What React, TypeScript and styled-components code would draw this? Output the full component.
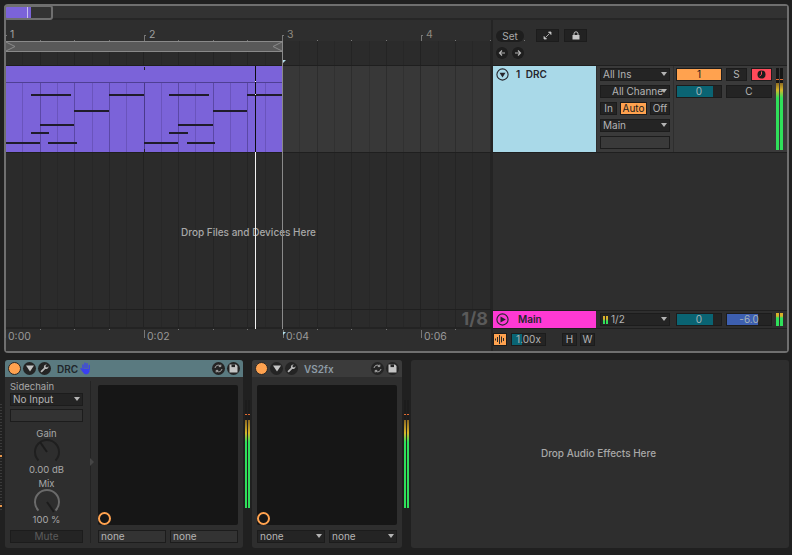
import styled, { createGlobalStyle, css } from "styled-components";

const BAR = 138.5;
const STEP = BAR / 8;

const GlobalStyle = createGlobalStyle`
  html, body {
    margin: 0;
    padding: 0;
    width: 792px;
    height: 555px;
    overflow: hidden;
    background: #202020;
    font-family: Inter, "Noto Sans", sans-serif;
    font-size: 10px;
    color: #b4b4b4;
  }
`;

// lines sit at the end of each step so the clip has no line on its left edge
const lineAt = (color: string, size: number) =>
  `repeating-linear-gradient(90deg, transparent 0 ${size - 1}px, ${color} ${size - 1}px ${size}px)`;

const gridLines = (weak: string, mid: string, strong: string) => css`
  background-image: ${lineAt(strong, BAR)}, ${lineAt(mid, BAR / 4)}, ${lineAt(weak, STEP)};
`;

const Page = styled.div`
  width: 792px;
  height: 555px;
  padding: 4px 3px 0 4px;
  box-sizing: border-box;
  display: flex;
  flex-direction: column;
  gap: 7px;
`;

const Arrangement = styled.div`
  position: relative;
  width: 785px;
  height: 349px;
  box-sizing: border-box;
  border: 2px solid #6f6f6f;
  border-radius: 4px;
  background: #2e2e2e;
  display: grid;
  grid-template-columns: 485px 1fr;
  grid-template-rows: 14px 45px 88px 157px 19px 1fr;
`;

const Overview = styled.div`
  grid-column: 1 / 3;
  background: #323232;
  border-bottom: 2px solid #262626;
`;

const OverviewThumb = styled.div`
  position: absolute;
  left: -2px;
  top: -1px;
  width: 49px;
  height: 15px;
  box-sizing: border-box;
  border: 2px solid #6f6f6f;
  border-radius: 3px;
  background: linear-gradient(90deg, #7b63d9 0 21px, #c8c0ee 21px 22px, #7b63d9 22px 25px, #333 25px);
`;

const BeatRuler = styled.div`
  position: relative;
  background: #2e2e2e;
`;

const BarLabel = styled.span<{ $x: number; $dim?: boolean }>`
  position: absolute;
  left: ${(p) => p.$x}px;
  top: 9px;
  padding-left: 5px;
  font-size: 10.5px;
  line-height: 12px;
  color: ${(p) => (p.$dim ? "#8f8a80" : "#a0a0a0")};
  &::before {
    content: "";
    position: absolute;
    left: 0;
    top: 6px;
    width: 2px;
    height: 6px;
    box-sizing: border-box;
    border-left: 1px solid #777;
    border-top: 1px solid #777;
  }
`;

const RulerTick = styled.i<{ $x: number }>`
  position: absolute;
  left: ${(p) => p.$x}px;
  top: 20px;
  width: 1px;
  height: 1px;
  background: #777;
`;

const LoopBrace = styled.div`
  position: absolute;
  left: 0;
  top: 21px;
  width: 276px;
  height: 11px;
  box-sizing: border-box;
  border-top: 1px solid #8a8a8a;
  border-bottom: 1px solid #8a8a8a;
  background: #595959;
`;

const BraceEnd = styled.svg<{ $right?: boolean }>`
  position: absolute;
  top: 0;
  width: 10px;
  height: 9px;
  ${(p) => (p.$right ? "right: 0;" : "left: 0;")}
`;

const RulerGrid = styled.div`
  position: absolute;
  left: 0;
  right: 0;
  top: 21px;
  height: 24px;
  background-color: #2b2b2b;
  ${gridLines("#272727", "#242424", "#222222")}
`;

const ClipLane = styled.div`
  position: relative;
  border-top: 1px solid #1f1f1f;
  border-bottom: 1px solid #1f1f1f;
  background-color: #383838;
  ${gridLines("#313131", "#2d2d2d", "#2a2a2a")}
`;

const Clip = styled.div`
  position: absolute;
  left: 0;
  top: 0;
  bottom: 0;
  width: 276px;
  background: #7b63d9;
  display: flex;
  flex-direction: column;
`;

const ClipTitle = styled.div`
  position: relative;
  height: 16px;
  flex: none;
  border-bottom: 1px solid #4f3f94;
`;

const ClipTick = styled.i<{ $bottom?: boolean }>`
  position: absolute;
  left: 138px;
  ${(p) => (p.$bottom ? "bottom: 0;" : "top: 1px;")}
  width: 1px;
  height: 3px;
  background: #222;
`;

const ClipNotes = styled.div`
  position: relative;
  flex: 1;
  ${gridLines("#6a54bd", "#5b48a6", "#4a3a8a")}
`;

const Note = styled.i`
  position: absolute;
  height: 2px;
  background: #1f1c2b;
`;

const EmptyLane = styled.div`
  position: relative;
  background-color: #2b2b2b;
  ${gridLines("#272727", "#242424", "#222222")}
  display: flex;
  align-items: center;
  justify-content: center;
  border-bottom: 1px solid #1f1f1f;
`;

const DropHint = styled.span`
  font-size: 10px;
  font-weight: 500;
  color: #a8a8a8;
  margin-top: 1px;
`;

const MainLane = styled.div`
  position: relative;
  background-color: #2b2b2b;
  border-bottom: 2px solid #232323;
  ${gridLines("#272727", "#242424", "#222222")}
`;

const GridSize = styled.span`
  position: absolute;
  right: 3px;
  top: -1px;
  font-size: 18px;
  line-height: 20px;
  font-weight: 700;
  color: #5a5a5a;
`;

const TimeRuler = styled.div`
  position: relative;
  background: #2e2e2e;
`;

const TimeLabel = styled.span<{ $x: number }>`
  position: absolute;
  left: ${(p) => p.$x}px;
  top: 1px;
  height: 7px;
  padding-left: 2px;
  padding-top: 1px;
  font-size: 10.5px;
  line-height: 12px;
  color: #999;
  border-left: 1px solid #777;
`;

const PlayheadOver = styled.div`
  position: absolute;
  left: 249px;
  top: 60px;
  width: 1px;
  height: 263px;
  background: linear-gradient(180deg, #0c0c10 0 86px, #f2f2f2 86px);
`;

const PlayheadDot = styled.i<{ $y: number }>`
  position: absolute;
  left: 0;
  top: ${(p) => p.$y}px;
  width: 1px;
  height: 1px;
  background: #f2f2f2;
`;

const LoopEnd = styled.div`
  position: absolute;
  left: 276px;
  top: 35px;
  width: 1px;
  height: 288px;
  background: #8a8a8a;
`;

const LoopFlag = styled.i<{ $top: number }>`
  position: absolute;
  left: 277px;
  top: ${(p) => p.$top}px;
  width: 0;
  height: 0;
  border-top: 3px solid #b5e3ee;
  border-right: 3px solid transparent;
`;

const SideCell = styled.div`
  border-left: 2px solid #242424;
  background: #2e2e2e;
`;

const SetCell = styled(SideCell)`
  padding: 9px 0 0 3px;
  display: flex;
  flex-direction: column;
  gap: 5px;
`;

const SetRow = styled.div`
  display: flex;
  align-items: center;
`;

const SetPill = styled.div`
  width: 28px;
  height: 12px;
  border-radius: 6px;
  background: #1e1e1e;
  color: #a8a8a8;
  font-size: 10px;
  line-height: 12px;
  text-align: center;
  margin-right: 12px;
`;

const IconBox = styled.div`
  width: 23px;
  height: 13px;
  background: #222;
  border: 1px solid #1c1c1c;
  box-sizing: border-box;
  display: flex;
  align-items: center;
  justify-content: center;
  margin-right: 5px;
`;

const RoundNav = styled.div`
  width: 12px;
  height: 12px;
  border-radius: 50%;
  background: #1e1e1e;
  margin-right: 4px;
  display: flex;
  align-items: center;
  justify-content: center;
`;

const TrackRow = styled(SideCell)`
  display: flex;
  border-top: 1px solid #1f1f1f;
  border-bottom: 1px solid #1f1f1f;
`;

const TrackTitle = styled.div<{ $pink?: boolean }>`
  width: 103px;
  flex: none;
  box-sizing: border-box;
  background: ${(p) => (p.$pink ? "#ff39d4" : "#a9d9e8")};
  color: #26262c;
  font-size: 10px;
  font-weight: 600;
  word-spacing: 3px;
  display: flex;
  align-items: ${(p) => (p.$pink ? "center" : "flex-start")};
  gap: ${(p) => (p.$pink ? 9 : 7)}px;
  padding: ${(p) => (p.$pink ? "0 0 0 3px" : "2px 0 0 3px")};
  line-height: 13px;
`;

const TitleFold = styled.svg`
  width: 13px;
  height: 13px;
  flex: none;
`;

const RoutingCol = styled.div<{ $main?: boolean }>`
  width: 76px;
  flex: none;
  box-sizing: border-box;
  margin-left: 1px;
  background: ${(p) => (p.$main ? "#2e2e2e" : "#3a3a3a")};
  padding: 2px 3px;
  display: flex;
  flex-direction: column;
  gap: 4px;
`;

const MixerCol = styled.div<{ $main?: boolean }>`
  flex: 1;
  margin-left: 1px;
  background: ${(p) => (p.$main ? "#2e2e2e" : "#3a3a3a")};
  padding: 2px 0 0 2px;
  display: grid;
  grid-template-columns: 46px 21px 21px 7px;
  grid-auto-rows: 13px;
  column-gap: 4px;
  row-gap: 4px;
`;

const controlFrame = css`
  height: 13px;
  box-sizing: border-box;
  border: 1px solid #1c1c1c;
  background: #242424;
  font-size: 10px;
  line-height: 11px;
  color: #b4b4b4;
`;

const Chooser = styled.div<{ $inset?: boolean }>`
  ${controlFrame}
  position: relative;
  display: flex;
  align-items: center;
  gap: 3px;
  padding: 0 10px 0 ${(p) => (p.$inset ? 11 : 2)}px;
  white-space: nowrap;
  &::after {
    content: "";
    position: absolute;
    right: 2px;
    top: 3px;
    border-left: 3.5px solid transparent;
    border-right: 3.5px solid transparent;
    border-top: 4px solid #b4b4b4;
  }
`;

const ChooserSlot = styled.div`
  ${controlFrame}
  background: #3a3a3a;
`;

const MonitorRow = styled.div`
  display: flex;
  gap: 3px;
`;

const MonitorButton = styled.div<{ $on?: boolean; $w: number }>`
  ${controlFrame}
  width: ${(p) => p.$w}px;
  text-align: center;
  background: ${(p) => (p.$on ? "#ffa24f" : "#242424")};
  color: ${(p) => (p.$on ? "#1c1c1c" : "#b4b4b4")};
`;

const MixButton = styled.div<{ $on?: string; $dark?: boolean; $wide?: boolean }>`
  ${controlFrame}
  text-align: center;
  background: ${(p) => p.$on || "#242424"};
  color: ${(p) => (p.$dark ? "#1c1c1c" : "#b4b4b4")};
  ${(p) => p.$wide && "grid-column: 2 / 4;"}
  display: flex;
  align-items: center;
  justify-content: center;
`;

const MixValue = styled.div<{ $color: string; $fill: number; $main?: boolean }>`
  ${controlFrame}
  text-align: center;
  color: #a8b4b8;
  background: linear-gradient(90deg, ${(p) => p.$color} ${(p) => p.$fill}%, #242424 ${(p) => p.$fill}%);
  ${(p) => p.$main && "grid-column: span 2;"}
`;

const MeterPair = styled.div<{ $bar: number; $h: number }>`
  display: flex;
  gap: 1px;
  height: ${(p) => p.$h}px;
  > i {
    display: block;
    width: ${(p) => p.$bar}px;
    height: 100%;
  }
`;

const TrackMeterBar = styled.i`
  background:
    linear-gradient(180deg, #161616 0 11px, #e06a30 11px 12px, #161616 12px 15px, #8d6a22 15px, #d7b62a 22px, #2fe05a 30px);
`;

const MainMeterBar = styled.i`
  background: linear-gradient(180deg, #d8b02a 0 3px, #2fe05a 5px);
`;

const TrackMeter = styled(MeterPair)`
  grid-column: 4;
  grid-row: 1 / 6;
`;

const ZoomCell = styled(SideCell)`
  display: flex;
  align-items: flex-start;
  padding: 4px 0 0 0;
`;

const WaveBox = styled.div`
  width: 14px;
  height: 13px;
  background: #ffa24f;
  border: 1px solid #1c1c1c;
  box-sizing: border-box;
  display: flex;
  align-items: center;
  justify-content: center;
  margin-right: 4px;
`;

const RateBox = styled.div`
  ${controlFrame}
  width: 35px;
  text-align: center;
  background: linear-gradient(90deg, #0a6473 0 10px, #242424 10px);
  margin-right: 16px;
`;

const LetterBox = styled.div`
  ${controlFrame}
  width: 15px;
  text-align: center;
  margin-right: 3px;
`;

const DeviceChain = styled.div`
  display: flex;
  align-items: stretch;
  height: 188px;
  gap: 2px;
`;

const EdgeStrip = styled.div`
  position: relative;
  width: 2px;
  height: 108px;
  margin: 44px 1px 0 -4px;
  background: repeating-linear-gradient(180deg, #3a3a3a 0 1px, transparent 1px 3px);
`;

const EdgeMark = styled.i<{ $y: number }>`
  position: absolute;
  left: 0;
  top: ${(p) => p.$y}px;
  width: 2px;
  height: 2px;
  background: #e8954a;
`;

const Device = styled.div<{ $w: number }>`
  width: ${(p) => p.$w}px;
  flex: none;
  background: #2e2e2e;
  border-radius: 3px;
  display: flex;
  flex-direction: column;
  overflow: hidden;
`;

const DeviceHead = styled.div<{ $teal?: boolean }>`
  height: 17px;
  flex: none;
  background: ${(p) => (p.$teal ? "#5a7a80" : "#3b3b3b")};
  display: flex;
  align-items: center;
  padding: 0 3px;
  gap: 2px;
`;

const PowerDot = styled.div`
  width: 13px;
  height: 13px;
  box-sizing: border-box;
  border-radius: 50%;
  background: #ffa24f;
  border: 1px solid #262626;
`;

const HeadRound = styled.div`
  width: 13px;
  height: 13px;
  border-radius: 50%;
  background: #242424;
  display: flex;
  align-items: center;
  justify-content: center;
  flex: none;
`;

const DeviceName = styled.span<{ $teal?: boolean }>`
  margin-left: 4px;
  font-size: 10px;
  font-weight: 600;
  color: ${(p) => (p.$teal ? "#20262a" : "#8d9ba6")};
`;

const HeadSpacer = styled.div`
  flex: 1;
`;

const DeviceBody = styled.div`
  flex: 1;
  display: flex;
  padding: 8px 5px 5px 5px;
`;

const SidePane = styled.div`
  width: 73px;
  flex: none;
  margin-top: -4px;
  display: flex;
  flex-direction: column;
  align-items: center;
  font-size: 9.5px;
  color: #a8a8a8;
`;

const SideLabel = styled.div<{ $left?: boolean; $top?: number }>`
  align-self: ${(p) => (p.$left ? "flex-start" : "center")};
  line-height: 11px;
  margin-top: ${(p) => p.$top || 0}px;
`;

const SideChooser = styled(Chooser)`
  width: 100%;
  margin-top: 1px;
`;

const SideEmpty = styled.div`
  ${controlFrame}
  width: 100%;
  margin-top: 3px;
  flex: none;
  background: #333;
`;

const MuteButton = styled.div`
  ${controlFrame}
  width: 100%;
  margin-top: auto;
  text-align: center;
  color: #5c5c5c;
`;

const KnobSvg = styled.svg`
  width: 28px;
  height: 26px;
  display: block;
  flex: none;
`;

const PaneDivider = styled.div`
  position: relative;
  width: 1px;
  flex: none;
  margin: -4px 7px 0;
  background: #232323;
  &::after {
    content: "";
    position: absolute;
    left: 0;
    top: 77px;
    border-top: 4px solid transparent;
    border-bottom: 4px solid transparent;
    border-left: 4px solid #454545;
  }
`;

const PlotPane = styled.div`
  flex: 1;
  display: flex;
  flex-direction: column;
  gap: 5px;
`;

const Plot = styled.div`
  position: relative;
  flex: 1;
  background: #161616;
  border-radius: 2px;
`;

const PlotHandle = styled.i`
  position: absolute;
  left: 0;
  bottom: 0;
  width: 13px;
  height: 13px;
  box-sizing: border-box;
  border: 2px solid #ffa24f;
  border-radius: 50%;
`;

const PlotControls = styled.div`
  display: flex;
  gap: 4px;
  > * {
    flex: 1;
  }
`;

const NoneField = styled.div`
  ${controlFrame}
  background: #333;
  padding-left: 2px;
`;

const DeviceMeter = styled(MeterPair)`
  margin-top: 40px;
  margin-bottom: auto;
`;

const DeviceMeterBar = styled.i`
  background:
    linear-gradient(180deg, #1c1c1c 0 14px, #e06a30 14px 15px, #1c1c1c 15px 20px, #8d6a22 20px, #d7b62a 33px, #2fe05a 42px);
`;

const DropPanel = styled.div`
  flex: 1;
  background: #2e2e2e;
  border-radius: 3px;
  display: flex;
  align-items: center;
  justify-content: center;
  font-size: 10px;
  font-weight: 500;
  color: #a8a8a8;
  padding: 0 3px 2px 0;
`;

const notes = [
  [31, 71, 94], [109, 144, 94], [169, 209, 94], [247, 282, 94],
  [74, 109, 110], [213, 247, 110],
  [40, 74, 124], [178, 213, 124],
  [31, 49, 132], [169, 188, 132],
  [6, 40, 142], [48, 77, 142], [144, 178, 142], [187, 215, 142],
];

const FoldIcon = ({ color = "#26262c", up = false }: { color?: string; up?: boolean }) => (
  <TitleFold viewBox="0 0 13 13">
    <circle cx="6.5" cy="6.5" r="5.6" fill="none" stroke={color} strokeWidth="1.1" />
    {up
      ? <path d="M4.5 3.5 L9.8 6.5 L4.5 9.5 Z" fill={color} />
      : <path d="M3.5 4.8 H9.5 L6.5 9.5 Z" fill={color} />}
  </TitleFold>
);

const Wrench = () => (
  <svg width="9" height="9" viewBox="0 0 9 9">
    <path d="M8.6 2.2 A2.6 2.6 0 0 1 5.2 4.9 L2 8.2 A1 1 0 0 1 .7 6.9 L4 3.7 A2.6 2.6 0 0 1 6.8 .4 L5.3 1.9 L5.9 3 L7 3.6 Z" fill="#b8b8b8" />
  </svg>
);

const Swap = () => (
  <svg width="9" height="9" viewBox="0 0 9 9" fill="none" stroke="#a8a8a8" strokeWidth="1">
    <path d="M1 4 A3.5 3.5 0 0 1 6.5 1.8" />
    <path d="M8 5 A3.5 3.5 0 0 1 2.5 7.2" />
    <path d="M6.8 .6 V2.6 H4.8" />
    <path d="M2.2 8.4 V6.4 H4.2" />
  </svg>
);

const Floppy = () => (
  <svg width="9" height="9" viewBox="0 0 9 9">
    <path d="M.5 .5 H7 L8.5 2 V8.5 H.5 Z" fill="#c4c4c4" />
    <rect x="2.5" y=".5" width="3.5" height="2.6" fill="#242424" />
  </svg>
);

const FoldTriangle = () => (
  <svg width="8" height="7" viewBox="0 0 8 7">
    <path d="M0 .5 H8 L4 6.5 Z" fill="#c4c4c4" />
  </svg>
);

const HandIcon = () => (
  <svg width="11" height="13" viewBox="0 0 11 13" fill="none" stroke="#3a40f0" strokeLinecap="round">
    <path d="M3 7 V3 M5 6 V1.2 M7 6 V1.6 M9.3 7 V3.4" strokeWidth="1.3" />
    <path d="M1 6.5 L2.6 9" strokeWidth="1.3" />
    <path d="M3 7.5 H9 V9.5 Q8.5 12 6 12 Q4 12 3 9.5 Z" fill="#3a40f0" strokeWidth="1" />
  </svg>
);

const Knob = ({ active, angle }: { active: boolean; angle: number }) => {
  const rad = (angle * Math.PI) / 180;
  const x = 14 + 12 * Math.sin(rad);
  const y = 13 - 12 * Math.cos(rad);
  return (
    <KnobSvg viewBox="0 0 28 26">
      <path
        d="M5.5 21.5 A12 12 0 1 1 22.5 21.5"
        fill="none"
        stroke={active ? "#6a6a6a" : "#1f1f1f"}
        strokeWidth="2"
      />
      <path d={`M14 13 L${x} ${y}`} stroke="#1c1c1c" strokeWidth="2" />
    </KnobSvg>
  );
};

const Head = ({ name, teal }: { name: string; teal?: boolean }) => (
  <DeviceHead $teal={teal}>
    <PowerDot />
    <HeadRound><FoldTriangle /></HeadRound>
    <HeadRound><Wrench /></HeadRound>
    <DeviceName $teal={teal}>{name}</DeviceName>
    {teal && <HandIcon />}
    <HeadSpacer />
    <HeadRound><Swap /></HeadRound>
    <HeadRound><Floppy /></HeadRound>
  </DeviceHead>
);

const App = () => {
  return (
    <Page>
      <GlobalStyle />
      <Arrangement>
        <Overview />
        <OverviewThumb />

        <BeatRuler>
          <RulerGrid />
          <BarLabel $x={-1}>1</BarLabel>
          <BarLabel $x={138}>2</BarLabel>
          <BarLabel $x={276} $dim>3</BarLabel>
          <BarLabel $x={415} $dim>4</BarLabel>
          {[1, 2, 3, 5, 6, 7, 9, 10, 11, 13, 14, 15].map((i) => (
            <RulerTick key={i} $x={i * (BAR / 4) - 1} />
          ))}
          <LoopBrace>
            <BraceEnd viewBox="0 0 10 9"><path d="M0 0 L9 4.5 L0 9" fill="none" stroke="#8a8a8a" /></BraceEnd>
            <BraceEnd $right viewBox="0 0 10 9"><path d="M10 0 L1 4.5 L10 9" fill="none" stroke="#8a8a8a" /></BraceEnd>
          </LoopBrace>
        </BeatRuler>
        <SetCell>
          <SetRow>
            <SetPill>Set</SetPill>
            <IconBox>
              <svg width="9" height="9" viewBox="0 0 9 9">
                <path d="M5.5 1 H8 V3.5 Z M1 5.5 V8 H3.5 Z M3 6 L6 3" fill="#c8c8c8" stroke="#c8c8c8" strokeWidth=".8" />
              </svg>
            </IconBox>
            <IconBox>
              <svg width="10" height="9" viewBox="0 0 10 9">
                <path d="M3 4 V2.8 A2 2 0 0 1 7 2.8 V4" fill="none" stroke="#c8c8c8" />
                <rect x="1.5" y="4" width="7" height="4.5" fill="#c8c8c8" />
              </svg>
            </IconBox>
          </SetRow>
          <SetRow>
            <RoundNav>
              <svg width="8" height="8" viewBox="0 0 8 8"><path d="M7 4 H2 M4 1.5 L1.5 4 L4 6.5" fill="none" stroke="#b4b4b4" strokeWidth="1.2" /></svg>
            </RoundNav>
            <RoundNav>
              <svg width="8" height="8" viewBox="0 0 8 8"><path d="M1 4 H6 M4 1.5 L6.5 4 L4 6.5" fill="none" stroke="#b4b4b4" strokeWidth="1.2" /></svg>
            </RoundNav>
          </SetRow>
        </SetCell>

        <ClipLane>
          <Clip>
            <ClipTitle><ClipTick /></ClipTitle>
            <ClipNotes>
              <ClipTick $bottom />
              {notes.map(([from, to, y], i) => (
                <Note
                  key={i}
                  style={{ left: from - 6, width: to - from, top: y - 83 }}
                />
              ))}
            </ClipNotes>
          </Clip>
        </ClipLane>
        <TrackRow>
          <TrackTitle><FoldIcon />1 DRC</TrackTitle>
          <RoutingCol>
            <Chooser>All Ins</Chooser>
            <Chooser $inset>All Channe</Chooser>
            <MonitorRow>
              <MonitorButton $w={17}>In</MonitorButton>
              <MonitorButton $w={27} $on>Auto</MonitorButton>
              <MonitorButton $w={20}>Off</MonitorButton>
            </MonitorRow>
            <Chooser>Main</Chooser>
            <ChooserSlot />
          </RoutingCol>
          <MixerCol>
            <MixButton $on="#ffa24f" $dark>1</MixButton>
            <MixButton>S</MixButton>
            <MixButton $on="#ff4a5a" $dark>
              <svg width="9" height="9" viewBox="0 0 9 9">
                <circle cx="4.5" cy="4.5" r="4" fill="#1c1c1c" />
                <path d="M4.5 1.5 V4.5 L2.6 6" stroke="#ff4a5a" fill="none" />
              </svg>
            </MixButton>
            <TrackMeter $bar={3} $h={82}><TrackMeterBar /><TrackMeterBar /></TrackMeter>
            <MixValue $color="#0a6473" $fill={82}>0</MixValue>
            <MixButton $wide>C</MixButton>
          </MixerCol>
        </TrackRow>

        <EmptyLane><DropHint>Drop Files and Devices Here</DropHint></EmptyLane>
        <SideCell />

        <MainLane><GridSize>1/8</GridSize></MainLane>
        <TrackRow>
          <TrackTitle $pink><FoldIcon up />Main</TrackTitle>
          <RoutingCol $main>
            <Chooser>
              <MeterPair $bar={2} $h={8}><MainMeterBar /><MainMeterBar /></MeterPair>
              1/2
            </Chooser>
          </RoutingCol>
          <MixerCol $main>
            <MixValue $color="#0a6473" $fill={82}>0</MixValue>
            <MixValue $color="#3d5fb0" $fill={70} $main>-6.0</MixValue>
            <MeterPair $bar={3} $h={13}><MainMeterBar /><MainMeterBar /></MeterPair>
          </MixerCol>
        </TrackRow>

        <TimeRuler>
          <TimeLabel $x={-1}>0:00</TimeLabel>
          <TimeLabel $x={138}>0:02</TimeLabel>
          <TimeLabel $x={277}>0:04</TimeLabel>
          <TimeLabel $x={415}>0:06</TimeLabel>
          {[1, 2, 3, 5, 6, 7, 9, 10, 11, 13].map((i) => (
            <RulerTick key={i} $x={i * (BAR / 4) - 1} style={{ top: 0 }} />
          ))}
        </TimeRuler>
        <ZoomCell>
          <WaveBox>
            <svg width="10" height="9" viewBox="0 0 10 9" stroke="#2a2a2a" strokeWidth="1">
              <path d="M.5 3.5 V5.5 M2.5 2 V7 M4.5 0 V9 M6.5 1.5 V7.5 M8.5 3 V6" />
            </svg>
          </WaveBox>
          <RateBox>1.00x</RateBox>
          <LetterBox>H</LetterBox>
          <LetterBox>W</LetterBox>
        </ZoomCell>

        <PlayheadOver>
          <PlayheadDot $y={15} />
          <PlayheadDot $y={28} />
        </PlayheadOver>
        <LoopEnd />
        <LoopFlag $top={54} />
        <LoopFlag $top={326} />
      </Arrangement>

      <DeviceChain>
        <EdgeStrip>
          <EdgeMark $y={51} />
          <EdgeMark $y={101} />
        </EdgeStrip>
        <Device $w={238}>
          <Head name="DRC" teal />
          <DeviceBody>
            <SidePane>
              <SideLabel $left>Sidechain</SideLabel>
              <SideChooser>No Input</SideChooser>
              <SideEmpty />
              <SideLabel $top={6}>Gain</SideLabel>
              <Knob active={false} angle={-35} />
              <SideLabel $top={-1}>0.00 dB</SideLabel>
              <SideLabel $top={3}>Mix</SideLabel>
              <Knob active angle={145} />
              <SideLabel $top={-1}>100 %</SideLabel>
              <MuteButton>Mute</MuteButton>
            </SidePane>
            <PaneDivider />
            <PlotPane>
              <Plot><PlotHandle /></Plot>
              <PlotControls>
                <NoneField>none</NoneField>
                <NoneField>none</NoneField>
              </PlotControls>
            </PlotPane>
          </DeviceBody>
        </Device>
        <DeviceMeter $bar={2} $h={108}><DeviceMeterBar /><DeviceMeterBar /></DeviceMeter>
        <Device $w={150}>
          <Head name="VS2fx" />
          <DeviceBody>
            <PlotPane>
              <Plot><PlotHandle /></Plot>
              <PlotControls>
                <Chooser>none</Chooser>
                <Chooser>none</Chooser>
              </PlotControls>
            </PlotPane>
          </DeviceBody>
        </Device>
        <DeviceMeter $bar={2} $h={108}><DeviceMeterBar /><DeviceMeterBar /></DeviceMeter>
        <DropPanel>Drop Audio Effects Here</DropPanel>
      </DeviceChain>
    </Page>
  );
};

export default App;
